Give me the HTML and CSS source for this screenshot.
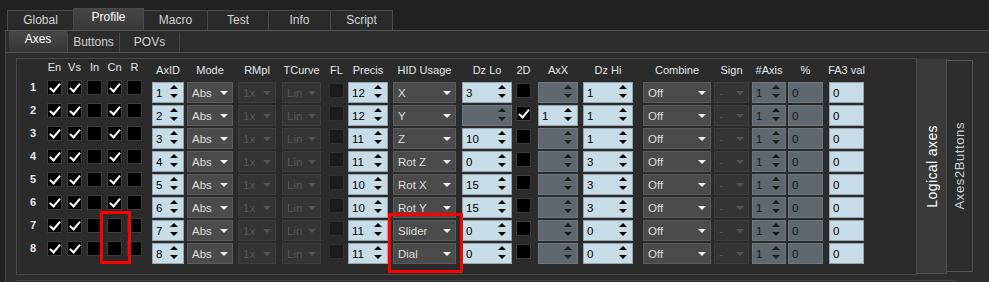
FILE: index.html
```html
<!DOCTYPE html>
<html lang="en">
<head>
<meta charset="UTF-8">
<title>Profile - Axes</title>
<link rel="stylesheet" href="styles.css">
</head>
<body>

<!-- Main tabs -->
<div class="tabs">
    <div class="tab t-global">Global</div>
    <div class="tab t-profile active">Profile</div>
    <div class="tab t-macro">Macro</div>
    <div class="tab t-test">Test</div>
    <div class="tab t-info">Info</div>
    <div class="tab t-script">Script</div>
</div>

<div class="page">
    <!-- Sub tabs -->
    <div class="subtabs">
        <div class="subtab s-axes active">Axes</div>
        <div class="subtab s-buttons">Buttons</div>
        <div class="subtab s-povs">POVs</div>
    </div>

    <div class="body-area">
        <div class="frame">
            <div class="grid">
                <!-- Header -->
                <div></div>
                <div class="hd hc">En</div>
                <div class="hd hc">Vs</div>
                <div class="hd hc">In</div>
                <div class="hd hc">Cn</div>
                <div class="hd hc">R</div>
                <div class="hd w32">AxID</div>
                <div class="hd w46">Mode</div>
                <div class="hd w38">RMpl</div>
                <div class="hd w39">TCurve</div>
                <div class="hd hm">FL</div>
                <div class="hd w40">Precis</div>
                <div class="hd w63">HID Usage</div>
                <div class="hd w50">Dz Lo</div>
                <div class="hd hm">2D</div>
                <div class="hd w40">AxX</div>
                <div class="hd w50">Dz Hi</div>
                <div class="hd w68">Combine</div>
                <div class="hd w35">Sign</div>
                <div class="hd w34">#Axis</div>
                <div class="hd w35">%</div>
                <div class="hd w35">FA3 val</div>

                <!-- Row 1 -->
                <div class="num">1</div>
                <div class="cb top on"></div>
                <div class="cb top on"></div>
                <div class="cb top"></div>
                <div class="cb top on"></div>
                <div class="cb top"></div>
                <div class="spin w32"><span>1</span><i class="arr"></i></div>
                <div class="combo w46">Abs</div>
                <div class="combo off w38">1x</div>
                <div class="combo off w39">Lin</div>
                <div class="cb mid dis"></div>
                <div class="spin w40"><span>12</span><i class="arr"></i></div>
                <div class="combo w63">X</div>
                <div class="spin w50"><span>3</span><i class="arr"></i></div>
                <div class="cb mid"></div>
                <div class="spin off w40"><i class="arr"></i></div>
                <div class="spin w50"><span>1</span><i class="arr"></i></div>
                <div class="combo w68">Off</div>
                <div class="combo off w35">-</div>
                <div class="spin off w34"><span>1</span><i class="arr"></i></div>
                <div class="spin off w35"><span>0</span></div>
                <div class="spin w35"><span>0</span></div>

                <!-- Row 2 -->
                <div class="num">2</div>
                <div class="cb top on"></div>
                <div class="cb top on"></div>
                <div class="cb top"></div>
                <div class="cb top on"></div>
                <div class="cb top"></div>
                <div class="spin w32"><span>2</span><i class="arr"></i></div>
                <div class="combo w46">Abs</div>
                <div class="combo off w38">1x</div>
                <div class="combo off w39">Lin</div>
                <div class="cb mid dis"></div>
                <div class="spin w40"><span>12</span><i class="arr"></i></div>
                <div class="combo w63">Y</div>
                <div class="spin off w50"><i class="arr"></i></div>
                <div class="cb mid on"></div>
                <div class="spin w40"><span>1</span><i class="arr"></i></div>
                <div class="spin w50"><span>1</span><i class="arr"></i></div>
                <div class="combo w68">Off</div>
                <div class="combo off w35">-</div>
                <div class="spin off w34"><span>1</span><i class="arr"></i></div>
                <div class="spin off w35"><span>0</span></div>
                <div class="spin w35"><span>0</span></div>

                <!-- Row 3 -->
                <div class="num">3</div>
                <div class="cb top on"></div>
                <div class="cb top on"></div>
                <div class="cb top"></div>
                <div class="cb top on"></div>
                <div class="cb top"></div>
                <div class="spin w32"><span>3</span><i class="arr"></i></div>
                <div class="combo w46">Abs</div>
                <div class="combo off w38">1x</div>
                <div class="combo off w39">Lin</div>
                <div class="cb mid dis"></div>
                <div class="spin w40"><span>11</span><i class="arr"></i></div>
                <div class="combo w63">Z</div>
                <div class="spin w50"><span>10</span><i class="arr"></i></div>
                <div class="cb mid"></div>
                <div class="spin off w40"><i class="arr"></i></div>
                <div class="spin w50"><span>1</span><i class="arr"></i></div>
                <div class="combo w68">Off</div>
                <div class="combo off w35">-</div>
                <div class="spin off w34"><span>1</span><i class="arr"></i></div>
                <div class="spin off w35"><span>0</span></div>
                <div class="spin w35"><span>0</span></div>

                <!-- Row 4 -->
                <div class="num">4</div>
                <div class="cb top on"></div>
                <div class="cb top on"></div>
                <div class="cb top"></div>
                <div class="cb top on"></div>
                <div class="cb top"></div>
                <div class="spin w32"><span>4</span><i class="arr"></i></div>
                <div class="combo w46">Abs</div>
                <div class="combo off w38">1x</div>
                <div class="combo off w39">Lin</div>
                <div class="cb mid dis"></div>
                <div class="spin w40"><span>11</span><i class="arr"></i></div>
                <div class="combo w63">Rot Z</div>
                <div class="spin w50"><span>0</span><i class="arr"></i></div>
                <div class="cb mid"></div>
                <div class="spin off w40"><i class="arr"></i></div>
                <div class="spin w50"><span>3</span><i class="arr"></i></div>
                <div class="combo w68">Off</div>
                <div class="combo off w35">-</div>
                <div class="spin off w34"><span>1</span><i class="arr"></i></div>
                <div class="spin off w35"><span>0</span></div>
                <div class="spin w35"><span>0</span></div>

                <!-- Row 5 -->
                <div class="num">5</div>
                <div class="cb top on"></div>
                <div class="cb top on"></div>
                <div class="cb top"></div>
                <div class="cb top on"></div>
                <div class="cb top"></div>
                <div class="spin w32"><span>5</span><i class="arr"></i></div>
                <div class="combo w46">Abs</div>
                <div class="combo off w38">1x</div>
                <div class="combo off w39">Lin</div>
                <div class="cb mid dis"></div>
                <div class="spin w40"><span>10</span><i class="arr"></i></div>
                <div class="combo w63">Rot X</div>
                <div class="spin w50"><span>15</span><i class="arr"></i></div>
                <div class="cb mid"></div>
                <div class="spin off w40"><i class="arr"></i></div>
                <div class="spin w50"><span>3</span><i class="arr"></i></div>
                <div class="combo w68">Off</div>
                <div class="combo off w35">-</div>
                <div class="spin off w34"><span>1</span><i class="arr"></i></div>
                <div class="spin off w35"><span>0</span></div>
                <div class="spin w35"><span>0</span></div>

                <!-- Row 6 -->
                <div class="num">6</div>
                <div class="cb top on"></div>
                <div class="cb top on"></div>
                <div class="cb top"></div>
                <div class="cb top on"></div>
                <div class="cb top"></div>
                <div class="spin w32"><span>6</span><i class="arr"></i></div>
                <div class="combo w46">Abs</div>
                <div class="combo off w38">1x</div>
                <div class="combo off w39">Lin</div>
                <div class="cb mid dis"></div>
                <div class="spin w40"><span>10</span><i class="arr"></i></div>
                <div class="combo w63">Rot Y</div>
                <div class="spin w50"><span>15</span><i class="arr"></i></div>
                <div class="cb mid"></div>
                <div class="spin off w40"><i class="arr"></i></div>
                <div class="spin w50"><span>3</span><i class="arr"></i></div>
                <div class="combo w68">Off</div>
                <div class="combo off w35">-</div>
                <div class="spin off w34"><span>1</span><i class="arr"></i></div>
                <div class="spin off w35"><span>0</span></div>
                <div class="spin w35"><span>0</span></div>

                <!-- Row 7 -->
                <div class="num">7</div>
                <div class="cb top on"></div>
                <div class="cb top on"></div>
                <div class="cb top"></div>
                <div class="cb top"></div>
                <div class="cb top"></div>
                <div class="spin w32"><span>7</span><i class="arr"></i></div>
                <div class="combo w46">Abs</div>
                <div class="combo off w38">1x</div>
                <div class="combo off w39">Lin</div>
                <div class="cb mid dis"></div>
                <div class="spin w40"><span>11</span><i class="arr"></i></div>
                <div class="combo w63">Slider</div>
                <div class="spin w50"><span>0</span><i class="arr"></i></div>
                <div class="cb mid"></div>
                <div class="spin off w40"><i class="arr"></i></div>
                <div class="spin w50"><span>0</span><i class="arr"></i></div>
                <div class="combo w68">Off</div>
                <div class="combo off w35">-</div>
                <div class="spin off w34"><span>1</span><i class="arr"></i></div>
                <div class="spin off w35"><span>0</span></div>
                <div class="spin w35"><span>0</span></div>

                <!-- Row 8 -->
                <div class="num">8</div>
                <div class="cb top on"></div>
                <div class="cb top on"></div>
                <div class="cb top"></div>
                <div class="cb top"></div>
                <div class="cb top"></div>
                <div class="spin w32"><span>8</span><i class="arr"></i></div>
                <div class="combo w46">Abs</div>
                <div class="combo off w38">1x</div>
                <div class="combo off w39">Lin</div>
                <div class="cb mid dis"></div>
                <div class="spin w40"><span>11</span><i class="arr"></i></div>
                <div class="combo w63">Dial</div>
                <div class="spin w50"><span>0</span><i class="arr"></i></div>
                <div class="cb mid"></div>
                <div class="spin off w40"><i class="arr"></i></div>
                <div class="spin w50"><span>0</span><i class="arr"></i></div>
                <div class="combo w68">Off</div>
                <div class="combo off w35">-</div>
                <div class="spin off w34"><span>1</span><i class="arr"></i></div>
                <div class="spin off w35"><span>0</span></div>
                <div class="spin w35"><span>0</span></div>
            </div>

            <!-- Highlight marks -->
            <div class="mark mark-cn"></div>
            <div class="mark mark-hid"></div>
        </div>

        <!-- Vertical tabs -->
        <div class="side">
            <div class="stab stab-logical"><span>Logical axes</span></div>
            <div class="stab stab-a2b"><span>Axes2Buttons</span></div>
        </div>
    </div>

    <div class="bottom-edge"></div>
</div>

</body>
</html>
```

FILE: styles.css
```css
/* Reset */
* {
    box-sizing: border-box;
    margin: 0;
    padding: 0;
}

body {
    width: 989px;
    height: 282px;
    overflow: hidden;
    background: #212121;
    color: #dcdcdc;
    font-family: "Liberation Sans", Arial, sans-serif;
}

/* Main tabs */
.tabs {
    display: flex;
    align-items: flex-end;
    height: 30px;
    padding-left: 7px;
}

.tab {
    height: 20px;
    margin-right: -1px;
    border: 1px solid #4a4a4a;
    border-bottom: none;
    background: #2a2a2a;
    color: #d2d2d2;
    font-size: 12px;
    line-height: 19px;
    text-align: center;
}

.tab.active {
    position: relative;
    z-index: 1;
    height: 22px;
    line-height: 17px;
    background: linear-gradient(#464646, #383838);
    color: #fff;
}

.t-global { width: 67px; }
.t-profile { width: 71px; }
.t-macro { width: 65px; }
.t-test { width: 62px; }
.t-info { width: 63px; }
.t-script { width: 63px; }

/* Page under the tabs */
.page {
    height: 252px;
    margin-left: 5px;
    border-top: 1px solid #555;
    border-left: 1px solid #474747;
    background: #2d2d2d;
}

.subtabs {
    display: flex;
    height: 22px;
    padding-left: 3px;
    border-bottom: 1px solid #4d4d4d;
}

.subtab {
    margin-top: 2px;
    border-right: 1px solid #474747;
    color: #d2d2d2;
    font-size: 12px;
    line-height: 19px;
    text-align: center;
}

.subtab.active {
    width: 58px;
    margin-top: 0;
    border-right: none;
    line-height: 16px;
    background: linear-gradient(#484848, #363636);
    color: #fff;
}

.s-buttons { width: 53px; border-left: 1px solid #474747; }
.s-povs { width: 60px; }

.body-area {
    display: flex;
    padding: 5px 0 0 10px;
}

/* Logical axes frame */
.frame {
    position: relative;
    width: 901px;
    height: 217px;
    border: 1px solid #4a4a4a;
    background: #2b2b2b;
}

.grid {
    display: grid;
    grid-template-columns: 20px 20px 20px 20px 20px 25px 35px 51px 44px 47px 19px 45px 69px 54px 22px 45px 60px 71px 38px 36px 41px 35px;
    grid-template-rows: repeat(9, 23px);
    margin-left: 10px;
}

.hd {
    display: flex;
    justify-content: center;
    align-self: end;
    margin-bottom: 5px;
    color: #e2e5ea;
    font-size: 11px;
    line-height: 13px;
    white-space: nowrap;
}

.hd.hc {
    width: 15px;
    margin-bottom: 8px;
}

.hd.hm { width: 15px; }

.num {
    align-self: start;
    margin-top: -2px;
    padding-left: 3px;
    color: #e8eaf0;
    font-size: 11px;
    font-weight: bold;
    line-height: 15px;
}

/* Check boxes */
.cb {
    position: relative;
    align-self: start;
    width: 15px;
    height: 15px;
    border: 1px solid #3c3c3c;
    background: #000;
}

.cb.top { margin-top: -2px; }
.cb.mid { margin-top: 1px; }

.cb.dis {
    border-color: #303030;
    background: #1b1b1b;
}

.cb.on::after {
    content: "";
    position: absolute;
    left: 4px;
    top: 0;
    width: 4px;
    height: 9px;
    border-right: 2px solid #fff;
    border-bottom: 2px solid #fff;
    transform: rotate(40deg);
}

/* Spin boxes */
.spin {
    display: flex;
    align-items: center;
    align-self: start;
    height: 21px;
    padding-left: 3px;
    border: 1px solid #93a6b0;
    background: #c7dce7;
    color: #000;
    font-size: 11.5px;
}

.spin.off {
    border-color: #6d777d;
    background: #5f686e;
    color: #151515;
}

.arr {
    display: flex;
    flex-direction: column;
    gap: 5px;
    margin-left: auto;
    margin-right: 5px;
    margin-bottom: 2px;
}

.arr::before {
    content: "";
    border-left: 4px solid transparent;
    border-right: 4px solid transparent;
    border-bottom: 4px solid #000;
}

.arr::after {
    content: "";
    border-left: 4px solid transparent;
    border-right: 4px solid transparent;
    border-top: 4px solid #000;
}

.spin.off .arr::before { border-bottom-color: #1c1c1c; }
.spin.off .arr::after { border-top-color: #1c1c1c; }

/* Combo boxes */
.combo {
    display: flex;
    align-items: center;
    align-self: start;
    height: 21px;
    padding-left: 4px;
    border: 1px solid #5b5b5b;
    background: #4b4b4b;
    color: #dedede;
    font-size: 11.5px;
}

.combo::after {
    content: "";
    margin-left: auto;
    margin-right: 4px;
    border-left: 4px solid transparent;
    border-right: 4px solid transparent;
    border-top: 4px solid #f2f2f2;
}

.combo.off {
    border-color: #3e3e3e;
    background: #343434;
    color: #585858;
}

.combo.off::after { border-top-color: #555; }

/* Widths */
.w32 { width: 32px; }
.w34 { width: 34px; }
.w35 { width: 35px; }
.w38 { width: 38px; }
.w39 { width: 39px; }
.w40 { width: 40px; }
.w46 { width: 46px; }
.w50 { width: 50px; }
.w63 { width: 63px; }
.w68 { width: 68px; }

/* Red highlight marks */
.mark {
    position: absolute;
    border: 3px solid #f00;
}

.mark-cn {
    left: 83px;
    top: 152px;
    width: 31px;
    height: 53px;
}

.mark-hid {
    left: 371px;
    top: 154px;
    width: 75px;
    height: 60px;
}

/* Vertical tabs */
.side {
    display: flex;
    align-items: flex-start;
}

.stab {
    display: flex;
    align-items: center;
    justify-content: center;
}

.stab span {
    writing-mode: vertical-rl;
    transform: rotate(180deg);
    white-space: nowrap;
}

.stab-logical {
    width: 30px;
    height: 215px;
    margin-top: 1px;
    border-right: 1px solid #4f4f4f;
    border-bottom: 1px solid #4a4a4a;
    background: #3a3a3a;
    color: #fff;
    font-size: 14px;
    letter-spacing: 0.4px;
}

.stab-a2b {
    width: 26px;
    height: 212px;
    margin-top: 2px;
    border: 1px solid #555;
    border-left: none;
    background: #2d2d2d;
    color: #d0d0d0;
    font-size: 13px;
    letter-spacing: 0.6px;
}

.bottom-edge {
    width: 940px;
    margin: 5px 0 0 9px;
    border-top: 1px solid #454545;
}
```
